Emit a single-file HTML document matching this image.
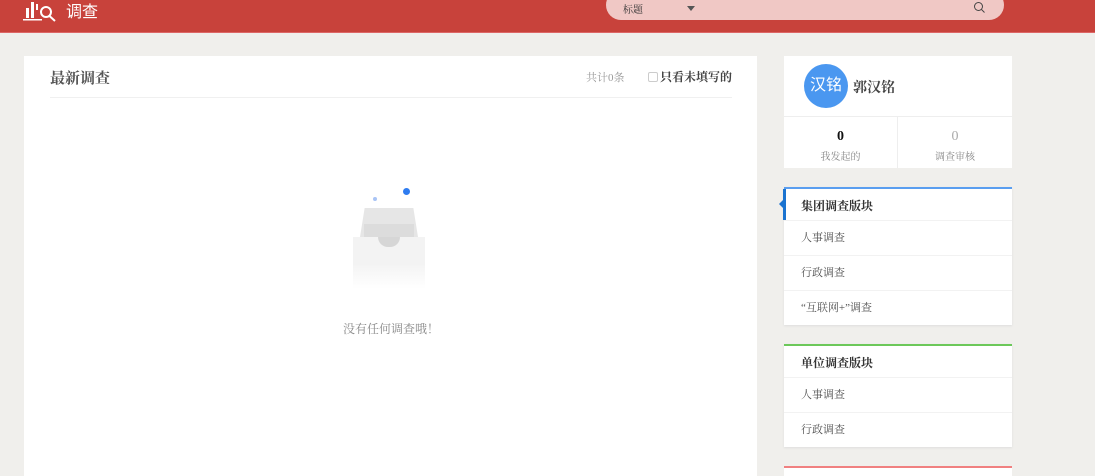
<!DOCTYPE html><html><head><meta charset="utf-8"><style>
*{margin:0;padding:0;box-sizing:border-box}
body{width:1095px;height:471px;overflow:hidden;background:#f0efec;font-family:"Liberation Serif","Noto Serif CJK SC",serif;position:relative;color:#333}
.hd{position:absolute;left:0;top:0;width:1095px;height:33px;background:#c8423b;border-bottom:1px solid #d66}
.a{position:absolute}
.card{position:absolute;background:#fff}
.row{position:absolute;left:0;width:228px;height:35px;border-top:1px solid #f2f2f2;font-size:11px;color:#555;padding-left:17px;line-height:34px}
</style></head><body>
<div class="hd">
<svg class="a" style="left:22px;top:0" width="36" height="24" viewBox="0 0 36 24"><rect x="4" y="8" width="3" height="10" fill="#fff"/><rect x="9" y="2" width="3" height="16" fill="#fff"/><rect x="14" y="4" width="2" height="6" fill="#fff"/><rect x="1" y="19" width="19" height="1.5" fill="#fff"/><circle cx="24" cy="12" r="5" stroke="#fff" stroke-width="2" fill="none"/><line x1="27.5" y1="16" x2="33" y2="21" stroke="#fff" stroke-width="2"/></svg>
<div class="a" style="left:66px;top:-2px;color:#fff;font-size:16px;font-family:'Liberation Sans','Noto Sans CJK SC',sans-serif">调查</div>
<div class="a" style="left:606px;top:-10px;width:398px;height:30px;border-radius:15px;background:#f0c8c5"></div>
<div class="a" style="left:623px;top:1px;font-size:10px;color:#333">标题</div>
<div class="a" style="left:687px;top:6px;width:0;height:0;border-left:4px solid transparent;border-right:4px solid transparent;border-top:5px solid #555"></div>
<svg class="a" style="left:973px;top:1px" width="13" height="13" viewBox="0 0 13 13"><circle cx="5.5" cy="5.5" r="4" stroke="#444" fill="none"/><line x1="8.5" y1="8.5" x2="11.5" y2="11.5" stroke="#444"/></svg>
</div>
<div class="card" style="left:24px;top:56px;width:733px;height:420px">
<div class="a" style="left:26px;top:11px;font-size:15px;font-weight:bold;color:#555">最新调查</div>
<div class="a" style="left:562px;top:13px;font-size:11px;color:#999">共计0条</div>
<div class="a" style="left:624px;top:16px;width:10px;height:10px;border:1px solid #ccc;border-radius:2px"></div>
<div class="a" style="left:636px;top:12px;font-size:12px;font-weight:bold;color:#444">只看未填写的</div>
<div class="a" style="left:26px;top:41px;width:682px;height:1px;background:#f0f0f0"></div>
<div class="a" style="left:349px;top:141px;width:4px;height:4px;border-radius:50%;background:#a9c4f5"></div>
<div class="a" style="left:379px;top:132px;width:7px;height:7px;border-radius:50%;background:#2f7cf0"></div>
<div class="a" style="left:336px;top:152px;width:58px;height:29px;background:#e6e6e6;clip-path:polygon(8% 0,92% 0,100% 100%,0 100%)"></div>
<div class="a" style="left:340px;top:168px;width:50px;height:13px;background:#dcdcdc"></div>
<div class="a" style="left:329px;top:181px;width:72px;height:28px;background:#f3f3f3"></div>
<div class="a" style="left:354px;top:181px;width:22px;height:10px;background:#d6d6d6;border-radius:0 0 11px 11px"></div>
<div class="a" style="left:329px;top:209px;width:72px;height:24px;background:linear-gradient(#f4f4f4,#fff)"></div>
<div class="a" style="left:319px;top:264px;font-size:12px;color:#888">没有任何调查哦！</div>
</div>
<div class="card" style="left:784px;top:56px;width:228px;height:112px">
<div class="a" style="left:20px;top:8px;width:44px;height:44px;border-radius:50%;background:#4a97f0;color:#fff;font-size:16px;line-height:44px;text-align:center;font-family:'Liberation Sans','Noto Sans CJK SC',sans-serif">汉铭</div>
<div class="a" style="left:69px;top:21px;font-size:14px;font-weight:bold;color:#444">郭汉铭</div>
<div class="a" style="left:0;top:60px;width:228px;height:1px;background:#eee"></div>
<div class="a" style="left:113px;top:60px;width:1px;height:52px;background:#eee"></div>
<div class="a" style="left:0;top:73px;width:113px;text-align:center;font-size:14px;font-weight:bold;color:#111">0</div>
<div class="a" style="left:0;top:92px;width:113px;text-align:center;font-size:10px;color:#888">我发起的</div>
<div class="a" style="left:114px;top:73px;width:114px;text-align:center;font-size:14px;color:#aaa">0</div>
<div class="a" style="left:114px;top:92px;width:114px;text-align:center;font-size:10px;color:#888">调查审核</div>
</div>
<div class="card" style="left:784px;top:187px;width:228px;height:138px;border-top:2px solid #5a9ef0;box-shadow:0 1px 2px #ddd">
<div class="a" style="left:-1px;top:0;width:3px;height:31px;background:#1a73d0"></div>
<div class="a" style="left:-5px;top:11px;border-right:4px solid #1a73d0;border-top:4px solid transparent;border-bottom:4px solid transparent"></div>
<div class="a" style="left:17px;top:8px;font-size:12px;font-weight:bold;color:#333">集团调查版块</div>
<div class="row" style="top:31px">人事调查</div>
<div class="row" style="top:66px">行政调查</div>
<div class="row" style="top:101px">“互联网+”调查</div>
</div>
<div class="card" style="left:784px;top:344px;width:228px;height:103px;border-top:2px solid #6cc85a;box-shadow:0 1px 2px #ddd">
<div class="a" style="left:17px;top:8px;font-size:12px;font-weight:bold;color:#333">单位调查版块</div>
<div class="row" style="top:31px">人事调查</div>
<div class="row" style="top:66px">行政调查</div>
</div>
<div class="card" style="left:784px;top:466px;width:228px;height:10px;border-top:2px solid #f08080"></div>
</body></html>
